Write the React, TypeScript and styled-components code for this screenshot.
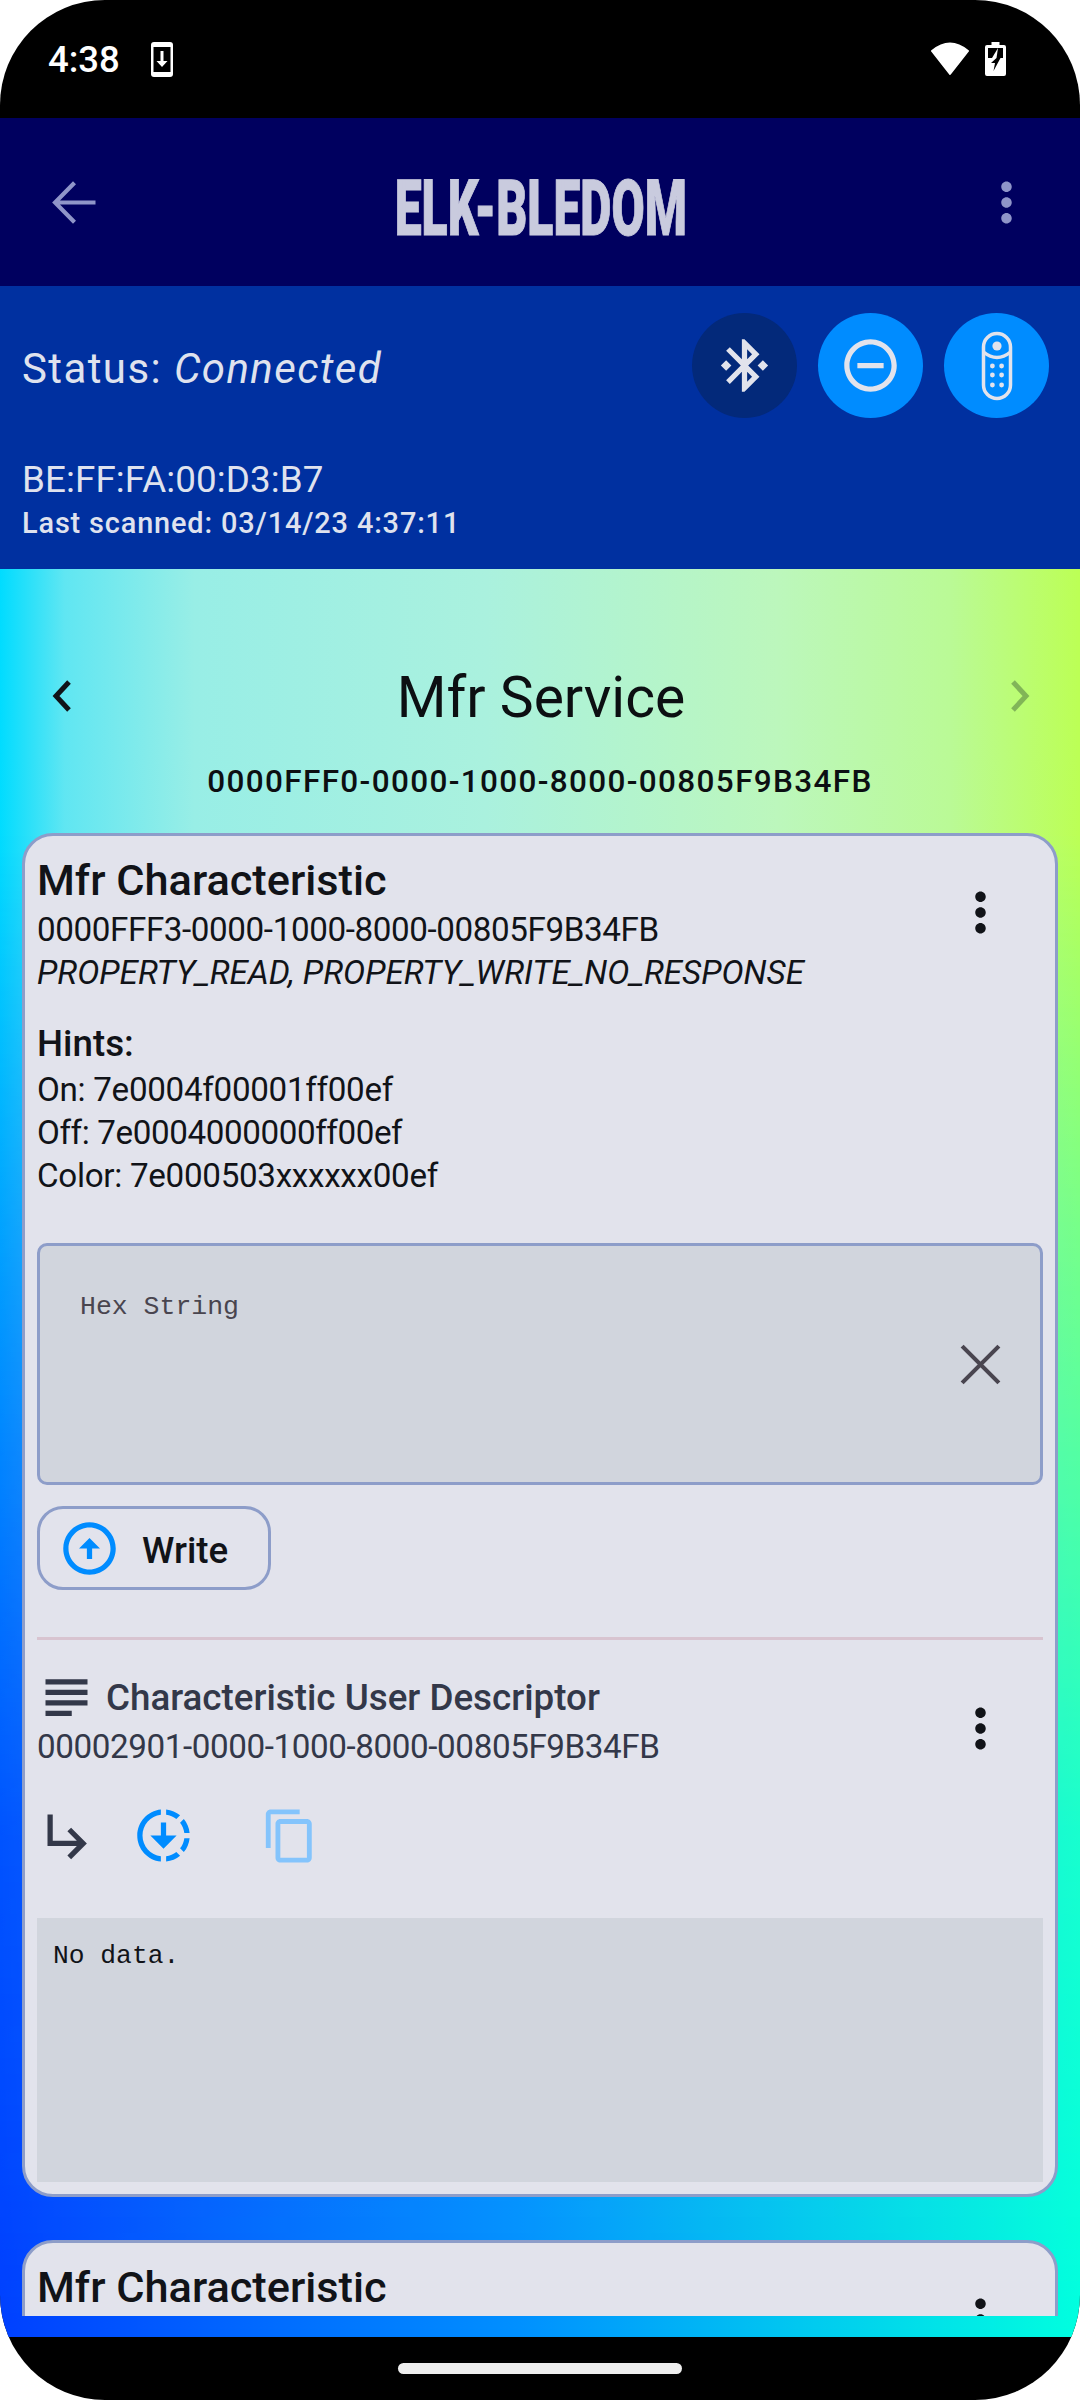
import { createGlobalStyle, styled } from "styled-components";

const GlobalStyle = createGlobalStyle`
  html, body {
    margin: 0;
    padding: 0;
    background: #fff;
  }
  body {
    font-family: Roboto, "Noto Sans", sans-serif;
  }
`;

const Screen = styled.div`
  width: 1080px;
  height: 2400px;
  border-radius: 105px;
  overflow: hidden;
  display: flex;
  flex-direction: column;
  background: #000;
`;

const StatusBar = styled.div`
  height: 118px;
  flex: none;
  display: flex;
  align-items: flex-start;
  padding: 42px 74px 0 48px;
  box-sizing: border-box;
  color: #fff;
`;

const Clock = styled.span`
  font-size: 36.5px;
  font-weight: 500;
  line-height: 36px;
  margin-right: 31px;
`;

const StatusIcons = styled.div`
  margin-left: auto;
  display: flex;
  gap: 16px;
`;

const TopBar = styled.header`
  height: 168px;
  flex: none;
  background: #00005f;
  display: flex;
  align-items: center;
  justify-content: space-between;
  padding: 0 42px 0 43px;
  box-sizing: border-box;
  color: #8f95c9;
`;

const AppTitle = styled.h1`
  margin: 14px 0 0;
  font-size: 77px;
  font-weight: 900;
  line-height: 80px;
  color: #c9cbde;
  white-space: nowrap;
  transform: scaleX(0.625);
  -webkit-text-stroke: 1px #c9cbde;
`;

const Panel = styled.section`
  height: 283px;
  flex: none;
  background: #0030a0;
  color: #dfe2ee;
  box-sizing: border-box;
  padding: 27px 31px 0 22px;
`;

const PanelTop = styled.div`
  display: flex;
  align-items: center;
  justify-content: space-between;
`;

const StatusText = styled.div`
  padding-top: 6px;
  font-size: 42px;
  font-weight: 400;
  letter-spacing: 1.4px;
  em {
    font-style: italic;
  }
`;

const RoundButtons = styled.div`
  display: flex;
  gap: 21px;
`;

const RoundButton = styled.div<{ $dark?: boolean }>`
  width: 105px;
  height: 105px;
  border-radius: 50%;
  background: ${(p) => (p.$dark ? "#03297a" : "#008cff")};
  color: #e2e3ec;
  display: flex;
  align-items: center;
  justify-content: center;
`;

const Address = styled.div`
  margin-top: 40px;
  font-size: 36.75px;
  font-weight: 400;
  letter-spacing: 0.1px;
  line-height: 44px;
`;

const Scanned = styled.div`
  margin-top: 2px;
  font-size: 28.9px;
  font-weight: 500;
  letter-spacing: 0.85px;
  line-height: 38px;
`;

const Content = styled.main`
  flex: 1;
  min-height: 0;
  position: relative;
  background: linear-gradient(to right, #0040ff 0%, #0070ff 28%, #0090ff 48%, #00c8f0 74%, #00ffe0 100%);
  &::before {
    content: "";
    position: absolute;
    inset: 0;
    background: linear-gradient(to right, #00dcff 0%, #60e6f2 6%, #98eee6 18%, #aaf1de 45%, #bcf7bc 72%, #bafa96 88%, #bcff55 100%);
    mask-image: linear-gradient(to bottom, #000 0%, #000 15%, rgba(0, 0, 0, 0.62) 38%, rgba(0, 0, 0, 0.12) 72%, transparent 100%);
  }
`;

const Scroller = styled.div`
  position: relative;
  height: 1747px;
  overflow: hidden;
  padding: 0 22px;
`;

const ServiceHeader = styled.div`
  height: 120px;
  margin: 68px 0 0;
  display: flex;
  align-items: center;
  justify-content: space-between;
  padding: 0 25px 0 27px;
  svg {
    margin-bottom: 2px;
  }
`;

const ServiceName = styled.h2`
  margin: 0;
  padding-top: 2px;
  font-size: 57px;
  font-weight: 400;
  line-height: 70px;
  color: #0c0f12;
`;

const ServiceUuid = styled.div`
  text-align: center;
  font-size: 31.5px;
  font-weight: 500;
  letter-spacing: 1.35px;
  line-height: 40px;
  color: #0c0f12;
  margin: 5px 0 31px;
`;

const Card = styled.article`
  box-sizing: border-box;
  background: #e2e3ec;
  border: 3px solid #8d9dc9;
  border-radius: 31px;
  padding: 18px 12px 12px;
  margin-bottom: 43px;
  color: #111318;
`;

const CardHeader = styled.div`
  display: flex;
  justify-content: space-between;
  align-items: flex-start;
`;

const CardTitle = styled.div`
  font-size: 43.3px;
  font-weight: 500;
  line-height: 54px;
`;

const Line = styled.div<{ $italic?: boolean; $tight?: number }>`
  font-size: 33.2px;
  font-weight: 400;
  line-height: 43px;
  letter-spacing: ${(p) => p.$tight || 0}px;
  font-style: ${(p) => (p.$italic ? "italic" : "normal")};
`;

const Hints = styled.div`
  margin-top: 26px;
`;

const HintTitle = styled(Line)`
  font-size: 36.75px;
  font-weight: 500;
  line-height: 48px;
`;

const MenuIcon = styled.div`
  margin: 27px 31px 0 0;
  width: 63px;
  height: 63px;
  color: #111318;
`;

const HexBox = styled.div`
  box-sizing: border-box;
  height: 242px;
  margin-top: 46px;
  background: #d1d5dd;
  border: 3px solid #8d9dc9;
  border-radius: 10px;
  padding: 0 28px 0 40px;
  display: flex;
  align-items: center;
  justify-content: space-between;
  color: #49454f;
`;

const Placeholder = styled.div`
  align-self: flex-start;
  margin-top: 44px;
  font-family: "Liberation Mono", monospace;
  font-size: 26.5px;
  line-height: 34px;
`;

const WriteButton = styled.button`
  box-sizing: border-box;
  width: 234px;
  height: 84px;
  margin-top: 21px;
  padding: 0 0 0 18px;
  background: transparent;
  border: 3px solid #8d9dc9;
  border-radius: 26px;
  display: flex;
  align-items: center;
  gap: 21px;
  font-family: inherit;
  font-size: 36.75px;
  font-weight: 500;
  color: #111318;
`;

const WriteLabel = styled.span`
  padding-top: 4px;
`;

const IconSlot = styled.span`
  display: inline-flex;
  color: #008cff;
`;

const Divider = styled.hr`
  margin: 47px 0 0;
  border: 0;
  height: 3px;
  background: #d8c4d0;
`;

const DescriptorHeader = styled(CardHeader)`
  margin-top: 32px;
  color: #333849;
`;

const DescriptorTitle = styled.div`
  display: flex;
  align-items: center;
  gap: 8px;
  height: 50px;
  font-size: 36.75px;
  font-weight: 500;
  color: #333849;
`;

const DescriptorIcon = styled.span`
  display: inline-flex;
  margin-left: -2px;
`;

const DescriptorUuid = styled(Line)`
  margin-top: 3px;
  color: #333849;
`;

const DescriptorMenu = styled(MenuIcon)`
  margin-top: 25px;
`;

const ActionRow = styled.div`
  margin-top: 36px;
  height: 63px;
  display: flex;
  align-items: center;
  color: #333849;
`;

const Action = styled.span<{ $left: number; $color?: string }>`
  display: inline-flex;
  margin-left: ${(p) => p.$left}px;
  color: ${(p) => p.$color || "inherit"};
`;

const DataBox = styled.div`
  box-sizing: border-box;
  height: 264px;
  margin-top: 51px;
  padding: 21px 16px;
  background: #d1d5dd;
  font-family: "Liberation Mono", monospace;
  font-size: 26.3px;
  line-height: 34px;
  color: #111318;
`;

const NavBar = styled.footer`
  height: 63px;
  flex: none;
  display: flex;
  justify-content: center;
  padding-top: 26px;
  box-sizing: border-box;
`;

const HomePill = styled.div`
  width: 284px;
  height: 11px;
  border-radius: 6px;
  background: #eeeeee;
`;

function Icon({ d, size = 63 }: { d: string; size?: number }) {
  return (
    <svg width={size} height={size} viewBox="0 0 24 24" fill="currentColor">
      <path d={d} />
    </svg>
  );
}

const KEBAB = "M12 8c1.1 0 2-.9 2-2s-.9-2-2-2-2 .9-2 2 .9 2 2 2zm0 2c-1.1 0-2 .9-2 2s.9 2 2 2 2-.9 2-2-.9-2-2-2zm0 6c-1.1 0-2 .9-2 2s.9 2 2 2 2-.9 2-2-.9-2-2-2z";
const BLUETOOTH = "M7 12l-2-2-2 2 2 2 2-2zm10.71-4.29L12 2h-1v7.59L6.41 5 5 6.41 10.59 12 5 17.59 6.41 19 11 14.41V22h1l5.71-5.71-4.3-4.29 4.3-4.29zM13 5.83l1.88 1.88L13 9.59V5.83zm1.88 10.46L13 18.17v-3.76l1.88 1.88zM19 10l-2 2 2 2 2-2-2-2z";
const MINUS_CIRCLE = "M7 11v2h10v-2H7zm5-9C6.48 2 2 6.48 2 12s4.48 10 10 10 10-4.48 10-10S17.52 2 12 2zm0 18c-4.41 0-8-3.59-8-8s3.59-8 8-8 8 3.59 8 8-3.59 8-8 8z";
const UP_CIRCLE = "M12 20c-4.41 0-8-3.59-8-8s3.59-8 8-8 8 3.59 8 8-3.59 8-8 8m0 2c5.52 0 10-4.48 10-10S17.52 2 12 2 2 6.48 2 12s4.48 10 10 10zm-1-10v4h2v-4h3l-4-4-4 4h3z";
const SUBJECT = "M14 17H4v2h10v-2zm6-8H4v2h16V9zM4 15h16v-2H4v2zM4 5v2h16V5H4z";
const SUBDIRECTORY = "M19 15l-6 6-1.42-1.42L15.17 16H4V4h2v10h9.17l-3.59-3.58L13 9l6 6z";
const DOWNLOADING = "M18.32,4.26C16.84,3.05,15.01,2.25,13,2.05v2.02c1.46,0.18,2.79,0.76,3.9,1.62L18.32,4.26z M19.93,11h2.02c-0.2-2.01-1-3.84-2.21-5.32L18.31,7.1C19.17,8.21,19.75,9.54,19.93,11z M18.31,16.9l1.43,1.43c1.21-1.48,2.01-3.32,2.21-5.32h-2.02C19.75,14.46,19.17,15.79,18.31,16.9z M13,19.93v2.02c2.01-0.2,3.84-1,5.32-2.21l-1.43-1.43C15.79,19.17,14.46,19.75,13,19.93z M13,12V7h-2v5H7l5,5l5-5H13z M11,19.93v2.02c-5.05-0.5-9-4.76-9-9.95s3.95-9.45,9-9.95v2.02C7.05,4.56,4,7.92,4,12S7.05,19.44,11,19.93z";
const COPY = "M16 1H4c-1.1 0-2 .9-2 2v14h2V3h12V1zm3 4H8c-1.1 0-2 .9-2 2v14c0 1.1.9 2 2 2h11c1.1 0 2-.9 2-2V7c0-1.1-.9-2-2-2zm0 16H8V7h11v14z";

function RemoteIcon() {
  return (
    <svg width="32" height="70" viewBox="0 0 32 70" fill="none">
      <rect x="2.5" y="2.5" width="27" height="65" rx="13.5" stroke="currentColor" strokeWidth="3.5" />
      <path d="M2.5 21 Q16 32 29.5 21" stroke="currentColor" strokeWidth="3.5" />
      <circle cx="16" cy="15" r="4.6" fill="currentColor" />
      {[35, 44, 54].map((cy) => (
        <g key={cy} fill="currentColor">
          <circle cx="11.4" cy={cy} r="2.4" />
          <circle cx="20.6" cy={cy} r="2.4" />
        </g>
      ))}
    </svg>
  );
}

function Chevron({ back, faded }: { back?: boolean; faded?: boolean }) {
  return (
    <svg width="26" height="36" viewBox="0 0 26 36" fill="none">
      <path
        d={back ? "M20 4 L7 18 L20 32" : "M6 4 L19 18 L6 32"}
        stroke={faded ? "rgba(50,80,50,0.42)" : "#111318"}
        strokeWidth="5"
      />
    </svg>
  );
}

export default function App() {
  return (
    <>
      <GlobalStyle />
      <Screen>
        <StatusBar>
          <Clock>4:38</Clock>
          <svg width="22" height="35" viewBox="0 0 22 35">
            <rect width="22" height="35" rx="3" fill="#fff" />
            <rect x="2.5" y="5" width="17" height="25" fill="#000" />
            <path d="M9.5 9h3v10h4l-5.5 6-5.5-6h4z" fill="#fff" />
          </svg>
          <StatusIcons>
            <svg width="38" height="34" viewBox="0 0 38 34">
              <path d="M1 9 Q19 -6 37 9 L19 32z" fill="#fff" stroke="#fff" strokeWidth="2" strokeLinejoin="round" />
            </svg>
            <svg width="21" height="34" viewBox="0 0 21 34">
              <path d="M6.5 0h8v3h4.5a2 2 0 0 1 2 2v27a2 2 0 0 1-2 2H2a2 2 0 0 1-2-2V5a2 2 0 0 1 2-2h4.5z" fill="#fff" />
              <rect x="3" y="6" width="15" height="10" fill="#000" />
              <path d="M13 6 L7 16 h4.5 z" fill="#fff" />
              <path d="M11.5 16 L6 21 h4 l-1.5 8 L15.5 16 z" fill="#000" />
            </svg>
          </StatusIcons>
        </StatusBar>

        <TopBar>
          <svg width="63" height="63" viewBox="0 0 24 24" fill="none" stroke="currentColor" strokeWidth="1.6">
            <path d="M20 12H5.2M12 4.5 4.6 12l7.4 7.5" />
          </svg>
          <AppTitle>ELK-BLEDOM</AppTitle>
          <Icon d={KEBAB} />
        </TopBar>

        <Panel>
          <PanelTop>
            <StatusText>
              Status: <em>Connected</em>
            </StatusText>
            <RoundButtons>
              <RoundButton $dark>
                <Icon d={BLUETOOTH} />
              </RoundButton>
              <RoundButton>
                <Icon d={MINUS_CIRCLE} />
              </RoundButton>
              <RoundButton>
                <RemoteIcon />
              </RoundButton>
            </RoundButtons>
          </PanelTop>
          <Address>BE:FF:FA:00:D3:B7</Address>
          <Scanned>Last scanned: 03/14/23 4:37:11</Scanned>
        </Panel>

        <Content>
          <Scroller>
            <ServiceHeader>
              <Chevron back />
              <ServiceName>Mfr Service</ServiceName>
              <Chevron faded />
            </ServiceHeader>
            <ServiceUuid>0000FFF0-0000-1000-8000-00805F9B34FB</ServiceUuid>

            <Card>
              <CardHeader>
                <div>
                  <CardTitle>Mfr Characteristic</CardTitle>
                  <Line $tight={-0.4}>0000FFF3-0000-1000-8000-00805F9B34FB</Line>
                  <Line $italic>PROPERTY_READ, PROPERTY_WRITE_NO_RESPONSE</Line>
                </div>
                <MenuIcon>
                  <Icon d={KEBAB} />
                </MenuIcon>
              </CardHeader>
              <Hints>
                <HintTitle>Hints:</HintTitle>
                <Line $tight={-0.3}>On: 7e0004f00001ff00ef</Line>
                <Line $tight={-0.4}>Off: 7e0004000000ff00ef</Line>
                <Line $tight={-0.3}>Color: 7e000503xxxxxx00ef</Line>
              </Hints>
              <HexBox>
                <Placeholder>Hex String</Placeholder>
                <svg width="63" height="63" viewBox="0 0 24 24" fill="none" stroke="currentColor" strokeWidth="1.6">
                  <path d="M5 5l14 14M19 5 5 19" />
                </svg>
              </HexBox>
              <WriteButton>
                <IconSlot>
                  <Icon d={UP_CIRCLE} />
                </IconSlot>
                <WriteLabel>Write</WriteLabel>
              </WriteButton>
              <Divider />
              <DescriptorHeader>
                <div>
                  <DescriptorTitle>
                    <DescriptorIcon>
                      <Icon d={SUBJECT} />
                    </DescriptorIcon>
                    Characteristic User Descriptor
                  </DescriptorTitle>
                  <DescriptorUuid $tight={-0.4}>00002901-0000-1000-8000-00805F9B34FB</DescriptorUuid>
                </div>
                <DescriptorMenu>
                  <Icon d={KEBAB} />
                </DescriptorMenu>
              </DescriptorHeader>
              <ActionRow>
                <Icon d={SUBDIRECTORY} />
                <Action $left={32} $color="#008cff">
                  <Icon d={DOWNLOADING} />
                </Action>
                <Action $left={66} $color="#84c4fc">
                  <Icon d={COPY} size={58} />
                </Action>
              </ActionRow>
              <DataBox>No data.</DataBox>
            </Card>

            <Card>
              <CardHeader>
                <CardTitle>Mfr Characteristic</CardTitle>
                <MenuIcon>
                  <Icon d={KEBAB} />
                </MenuIcon>
              </CardHeader>
            </Card>
          </Scroller>
        </Content>

        <NavBar>
          <HomePill />
        </NavBar>
      </Screen>
    </>
  );
}
